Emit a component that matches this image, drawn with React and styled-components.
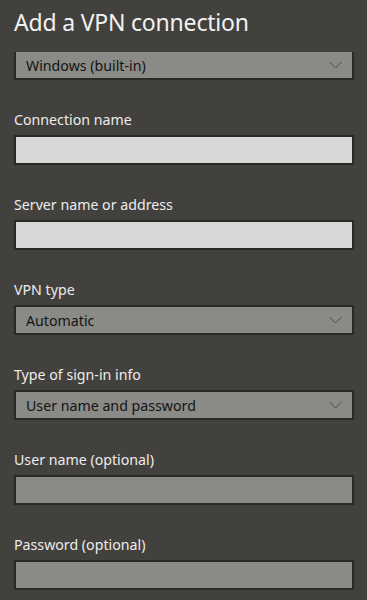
import styled, { createGlobalStyle } from 'styled-components'

const GlobalStyle = createGlobalStyle`
  html, body {
    margin: 0;
    padding: 0;
    background: #43413d;
  }
  body {
    font-family: "Noto Sans", "Open Sans", sans-serif;
  }
`

const Page = styled.div`
  width: 367px;
  height: 600px;
  overflow: hidden;
  box-sizing: border-box;
  padding: 0 13px 0 14px;
  background: #43413d;
`

const Title = styled.h1`
  margin: 0;
  padding-top: 7px;
  height: 52px;
  box-sizing: border-box;
  font-size: 23px;
  font-weight: 400;
  line-height: 30px;
  color: #f2f2f2;
  letter-spacing: -0.2px;
`

const Field = styled.div`
  margin-top: 30px;
  display: flex;
  flex-direction: column;
`

const Label = styled.label`
  font-size: 14.2px;
  line-height: 20px;
  margin-bottom: 5px;
  color: #ececec;
`

const Box = styled.div`
  box-sizing: border-box;
  border: 2px solid #2a2927;
  border-top-width: ${p => (p.$flat ? '0' : '2px')};
  height: ${p => (p.$flat ? '28px' : '30px')};
  background: ${p => (p.$light ? '#d8d8d6' : '#8a8a87')};
  display: flex;
  align-items: center;
  justify-content: space-between;
  padding: 0 10px 0 10px;
`

const BoxText = styled.span`
  font-size: 14.2px;
  color: #141414;
`

const Chevron = () => (
  <svg width="13" height="8" viewBox="0 0 13 8">
    <polyline points="0.5,1 6.5,7 12.5,1" fill="none" stroke="#4a4a47" strokeWidth="1" />
  </svg>
)

const Select = ({ value, flat }) => (
  <Box $flat={flat}>
    <BoxText>{value}</BoxText>
    <Chevron />
  </Box>
)

export default function App() {
  return (
    <Page>
      <GlobalStyle />
      <Title>Add a VPN connection</Title>
      <Select value="Windows (built-in)" flat />
      <Field>
        <Label>Connection name</Label>
        <Box $light />
      </Field>
      <Field>
        <Label>Server name or address</Label>
        <Box $light />
      </Field>
      <Field>
        <Label>VPN type</Label>
        <Select value="Automatic" />
      </Field>
      <Field>
        <Label>Type of sign-in info</Label>
        <Select value="User name and password" />
      </Field>
      <Field>
        <Label>User name (optional)</Label>
        <Box />
      </Field>
      <Field>
        <Label>Password (optional)</Label>
        <Box />
      </Field>
    </Page>
  )
}
